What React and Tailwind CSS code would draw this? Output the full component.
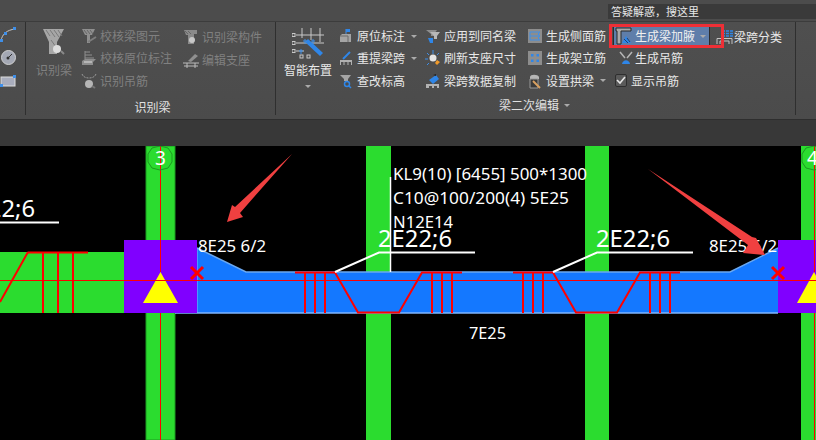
const CJK = "font-['Noto_Sans_CJK_SC','Noto_Sans',sans-serif]";

function Arrow() {
  return <span className="w-0 h-0 border-x-[3px] border-x-transparent border-t-[3px] border-t-[#aaa]" />;
}

/* small ribbon icons, 16x16 */
function Icon({ name }) {
  switch (name) {
    case "checkBeam":
      return (
        <svg width="16" height="16" viewBox="0 0 16 16">
          <path d="M1 1h13l-3 6H9v8H6V7H4z" fill="#8f8f8f" />
          <path d="M3 2l3 4M6 2l3 4M9 2l3 4" stroke="#666" />
          <path d="M7 14l8-5" stroke="#7d7d7d" strokeWidth="2" />
        </svg>
      );
    case "checkOrigin":
      return (
        <svg width="16" height="16" viewBox="0 0 16 16">
          <path d="M4 1v8M4 2h5M4 5h7M4 8h9" stroke="#8f8f8f" fill="none" />
          <path d="M1 11l3-2h11l-3 3v3H1z" fill="#8d8d8d" />
          <path d="M3 11h8v2H3z" fill="#b5b5b5" />
        </svg>
      );
    case "hanger":
      return (
        <svg width="16" height="16" viewBox="0 0 16 16">
          <path d="M1 1c1 3 4 4 7 4s6-1 7-4" stroke="#999" fill="none" strokeDasharray="2 1" />
          <circle cx="8" cy="11" r="4" fill="#b5b5b5" />
          <path d="M11 13l3 2" stroke="#777" strokeWidth="2" />
        </svg>
      );
    case "beamPart":
      return (
        <svg width="16" height="16" viewBox="0 0 16 16">
          <path d="M1 1h13v4h-3v10H5V6H3z" fill="#8a8a8a" />
          <path d="M2 2l3 3M5 2l3 3" stroke="#666" />
          <circle cx="9" cy="11" r="3" fill="#c8c8c8" />
        </svg>
      );
    case "support":
      return (
        <svg width="16" height="16" viewBox="0 0 16 16">
          <path d="M5 9l7-7 3 2-7 6z" fill="#8f8f8f" />
          <path d="M0 11h16M1 14h14M4 11v5M12 11v5" stroke="#bbb" fill="none" />
        </svg>
      );
    case "origin":
      return (
        <svg width="14" height="16" viewBox="0 0 14 16">
          <path d="M7 1v6" stroke="#4a90e2" />
          <path d="M7 1h4v3H7z" fill="#2f86e8" />
          <path d="M1 8l2-2h9v8H1z" fill="#a4a4a4" />
          <path d="M1 8h8v6" fill="none" stroke="#6a6a6a" />
        </svg>
      );
    case "respan":
      return (
        <svg width="14" height="16" viewBox="0 0 14 16">
          <path d="M4 9l7-7" stroke="#2f86e8" strokeWidth="2" />
          <path d="M1 10h12v5h-1v-3H2v3H1z" fill="#b0b0b0" />
          <path d="M5 12v3M9 12v3" stroke="#b0b0b0" />
        </svg>
      );
    case "elev":
      return (
        <svg width="14" height="16" viewBox="0 0 14 16">
          <path d="M1 2h11l-3 4v2H5V6z" fill="#a5a5a5" />
          <circle cx="8" cy="11" r="2.5" fill="none" stroke="#2f86e8" strokeWidth="1.5" />
          <path d="M10 13l2 2" stroke="#2f86e8" strokeWidth="1.5" />
        </svg>
      );
    case "apply":
      return (
        <svg width="16" height="16" viewBox="0 0 16 16">
          <path d="M1 2h11l-3 4v2H6V6z" fill="#8e8e8e" />
          <path d="M5 4h10l-3 4v3H9V8z" fill="#b8b8b8" />
          <path d="M3 10h5v5H5z" fill="#2f86e8" />
        </svg>
      );
    case "refresh":
      return (
        <svg width="18" height="18" viewBox="0 0 18 18">
          <path d="M9 1v4M3 4l2 2M15 4l-2 2M1 10h3" stroke="#3f8fe8" fill="none" />
          <path d="M3 16l2-2" stroke="#3f8fe8" />
          <circle cx="9" cy="9" r="3.5" fill="#e4e4e4" />
          <path d="M13 11l3 2-3 3-2-2z" fill="#f09a2a" />
        </svg>
      );
    case "copy":
      return (
        <svg width="16" height="16" viewBox="0 0 16 16">
          <path d="M4 7l7-5 3 4-6 5z" fill="#2f86e8" />
          <path d="M8 2l3-1v2z" fill="#222" />
          <path d="M1 11h13v4h-2v-2H9v2H7v-2H4v2H1z" fill="#b2b2b2" />
        </svg>
      );
    case "side":
      return (
        <svg width="14" height="14" viewBox="0 0 14 14">
          <rect width="14" height="14" fill="#8d8d8d" />
          <path d="M2 3h10M2 7h10M2 11h10" stroke="#3f8fe8" />
          <path d="M2 3v8M12 3l-2 2 2 2-2 2 2 2" stroke="#3f8fe8" fill="none" />
        </svg>
      );
    case "frame":
      return (
        <svg width="14" height="14" viewBox="0 0 14 14">
          <rect width="14" height="14" fill="#8d8d8d" />
          <rect x="3" y="3" width="2.5" height="2.5" fill="#2f86e8" />
          <rect x="8.5" y="3" width="2.5" height="2.5" fill="#2f86e8" />
          <rect x="3" y="8.5" width="2.5" height="2.5" fill="#2f86e8" />
          <rect x="8.5" y="8.5" width="2.5" height="2.5" fill="#2f86e8" />
        </svg>
      );
    case "arch":
      return (
        <svg width="14" height="16" viewBox="0 0 14 16">
          <path d="M2 4c0-3 8-3 9 0v2H2z" fill="#b5b5b5" />
          <path d="M2 6h8v9H2z" fill="#3a3a3a" stroke="#999" />
          <path d="M5 8l7 7" stroke="#d8a060" strokeWidth="2" />
        </svg>
      );
    case "haunch":
      return (
        <svg width="18" height="18" viewBox="0 0 18 18">
          <path d="M1 1h15v3H6v13H2V4H1z" fill="#a9a9a9" stroke="#2b2b2b" />
          <path d="M7 16l4-7 5 7z" fill="#2f86e8" />
          <path d="M9 12l4 4M12 11l3 4" stroke="#1f3f70" />
        </svg>
      );
    case "stirrup":
      return (
        <svg width="14" height="14" viewBox="0 0 14 14">
          <path d="M1 1l5 6M13 1L8 7" stroke="#b5b5b5" strokeWidth="1.5" fill="none" />
          <path d="M3 13c1-5 7-5 8 0z" fill="#2f86e8" />
        </svg>
      );
    default:
      return null;
  }
}

function Item({ icon, label, arrow, dim, w }) {
  return (
    <div className={`h-[23px] flex items-center ${w}`}>
      <span className="w-[18px] mr-[1px] flex justify-center shrink-0"><Icon name={icon} /></span>
      <span className={`ml-[1px] text-[12px] whitespace-nowrap ${dim ? "text-[#808080]" : "text-[#e8e8e8]"}`}>{label}</span>
      {arrow && <span className="ml-[6px] flex"><Arrow /></span>}
    </div>
  );
}

function Column({ className, children }) {
  return <div className={`flex flex-col shrink-0 ${className}`}>{children}</div>;
}

function Ribbon() {
  return (
    <div className={`relative h-[99px] flex border-t border-[#3c3c3c] border-b border-b-[#2e2e2e] bg-linear-to-b from-[#4f4f4f] to-[#4b4b4b] ${CJK}`}>
      {/* cut off draw tools */}
      <div className="w-[26px] shrink-0 flex flex-col pt-[5px] border-r border-[#2f2f2f] mb-[4px]">
        <svg width="17" height="16" viewBox="0 0 17 16">
          <path d="M1 14C2 7 7 3 15 2" stroke="#c9c9c9" fill="none" />
          <rect y="12" width="3" height="3" fill="#3f8fe8" />
          <rect x="4" y="5" width="3" height="3" fill="#3f8fe8" />
          <rect x="13" y="0" width="3" height="3" fill="#3f8fe8" />
        </svg>
        <svg className="mt-[7px] ml-[1px]" width="15" height="15" viewBox="0 0 15 15">
          <circle cx="7.5" cy="7.5" r="7" fill="#a4a8b4" stroke="#d0d0d0" />
          <path d="M7 8l4-4" stroke="#333" />
          <circle cx="7" cy="8" r="1.5" fill="#333" />
        </svg>
        <svg className="mt-[10px]" width="16" height="12" viewBox="0 0 16 12">
          <rect x="1" y="2" width="14" height="9" fill="#a9adbd" stroke="#ddd" />
          <rect x="13" y="0" width="3" height="3" fill="#3f8fe8" />
          <rect y="9" width="3" height="3" fill="#3f8fe8" />
        </svg>
      </div>

      {/* 识别梁 */}
      <div className="w-[250px] shrink-0 flex flex-col border-r border-[#2f2f2f] mb-[4px]">
        <div className="flex h-[70px] pt-[3px]">
          <div className="w-[54px] ml-[1px] flex flex-col items-center pt-[3px]">
            <svg width="24" height="28" viewBox="0 0 24 28">
              <path d="M1 1h21l-7 13v12H7V14z" fill="#a6a6a6" />
              <path d="M4 2l4 6M8 2l5 7M12 2l5 7M16 2l4 6M9 12l5 7" stroke="#7a7a7a" />
              <circle cx="15" cy="21" r="4" fill="#dcdcdc" />
              <path d="M19 23l3 3" stroke="#888" strokeWidth="2" />
            </svg>
            <span className="text-[12px] text-[#808080] mt-[5px]">识别梁</span>
          </div>
          <Column className="w-[102px] -ml-[1px]">
            <Item dim icon="checkBeam" label="校核梁图元" />
            <Item dim icon="checkOrigin" label="校核原位标注" />
            <Item dim icon="hanger" label="识别吊筋" />
          </Column>
          <Column className="w-[80px]">
            <Item dim icon="beamPart" label="识别梁构件" />
            <Item dim icon="support" label="编辑支座" />
          </Column>
        </div>
        <div className="text-[12px] text-[#e0e0e0] text-center pl-[4px] mt-[6px]">识别梁</div>
      </div>

      {/* 梁二次编辑 */}
      <div className="w-[520px] shrink-0 flex flex-col border-r border-[#2f2f2f] mb-[4px]">
        <div className="flex h-[70px] pt-[3px]">
          <div className="w-[62px] shrink-0 flex flex-col items-center pl-[2px] pt-[2px]">
            <svg width="32" height="32" viewBox="0 0 32 32">
              <path d="M4 8h28M4 16h28M4 24h8M10 1v10M19 1v12M28 1v14" stroke="#c8c8c8" fill="none" />
              <rect x="0" y="6.5" width="3" height="3" fill="none" stroke="#c8c8c8" />
              <rect x="0" y="14.5" width="3" height="3" fill="none" stroke="#c8c8c8" />
              <rect x="0" y="22.5" width="3" height="3" fill="none" stroke="#c8c8c8" />
              <rect x="8" y="28" width="3" height="3" fill="none" stroke="#c8c8c8" />
              <rect x="15" y="28" width="3" height="3" fill="none" stroke="#c8c8c8" />
              <path d="M13 15l3-3 15 14-3 3z" fill="#2f86e8" />
              <path d="M13 12v5M11 14h4M21 12v5M19 14h4M9 22v5M7 24h4" stroke="#3f8fe8" />
            </svg>
            <span className="text-[12px] text-[#e8e8e8] mt-[2px] whitespace-nowrap">智能布置</span>
            <span className="mt-[6px] flex"><Arrow /></span>
          </div>
          <Column className="w-[86px] -ml-[1px] mr-[1px]">
            <Item icon="origin" label="原位标注" arrow />
            <Item icon="respan" label="重提梁跨" arrow />
            <Item icon="elev" label="查改标高" />
          </Column>
          <Column className="w-[102px]">
            <Item icon="apply" label="应用到同名梁" />
            <Item icon="refresh" label="刷新支座尺寸" />
            <Item icon="copy" label="梁跨数据复制" />
          </Column>
          <Column className="w-[88px]">
            <Item icon="side" label="生成侧面筋" />
            <Item icon="frame" label="生成架立筋" />
            <Item icon="arch" label="设置拱梁" arrow />
          </Column>
          <Column className="w-[102px]">
            <div className="h-[23px] flex items-center ml-[-1px]">
              <div className="h-[21px] w-[97px] flex items-center bg-[#5f7eaa] border border-[#2c2c2c] pl-[1px]">
                <Icon name="haunch" />
                <span className="ml-[2px] text-[12px] text-[#f0f0f0] whitespace-nowrap">生成梁加腋</span>
                <span className="ml-[5px] flex"><Arrow /></span>
              </div>
            </div>
            <div className="h-[23px] flex items-center pl-[5px]">
              <Icon name="stirrup" />
              <span className="ml-[2px] text-[12px] text-[#e8e8e8]">生成吊筋</span>
            </div>
            <div className="h-[23px] flex items-center pl-[1px]">
              <span className="w-[12px] h-[13px] rounded-[2px] border border-[#2e2e2e] bg-[#5a5a5a] flex items-center justify-center">
                <svg width="10" height="9" viewBox="0 0 10 9"><path d="M1 4l3 3 5-6" stroke="#e6e6e6" strokeWidth="1.6" fill="none" /></svg>
              </span>
              <span className="ml-[4px] text-[12px] text-[#e8e8e8]">显示吊筋</span>
            </div>
          </Column>
          <Column className="w-[72px]">
            <div className="h-[23px] flex items-center">
              <svg width="17" height="14" viewBox="0 0 17 14">
                <path d="M6 1h11M6 3.5h11M6 6h11" stroke="#2f86e8" strokeWidth="1.5" strokeDasharray="3 1" />
                <path d="M1 14V8.5h15V14M4 14v-3h9v3" stroke="#c2c2c2" fill="none" />
              </svg>
              <span className="ml-[1px] text-[12px] text-[#e8e8e8] whitespace-nowrap">梁跨分类</span>
            </div>
          </Column>
        </div>
        <div className="flex items-center justify-center gap-[5px] mt-[4px] pr-[2px] text-[12px] text-[#e0e0e0]">
          <span>梁二次编辑</span>
          <Arrow />
        </div>
      </div>

      {/* highlight drawn on the shot */}
      <div className="absolute left-[609px] top-[2px] w-[115px] h-[24px] border-[3px] border-[#ee2f36]" />
    </div>
  );
}

function CadText({ x, y, size = 16, w, children }) {
  return (
    <text x={x} y={y} fontSize={size} fill="#fff" textLength={w} lengthAdjust="spacingAndGlyphs" className="font-['Noto_Sans',sans-serif]">
      {children}
    </text>
  );
}

function Rebars({ xs }) {
  return xs.map((x) => <path key={x} d={`M${x} 272V313`} stroke="#f00" strokeWidth="2" />);
}

function Canvas() {
  return (
    <div className="h-[294px] bg-black overflow-hidden">
      <svg width="816" height="294" viewBox="0 146 816 294" className="block">
        {/* columns */}
        <rect x="146" y="146" width="29" height="294" fill="#2bdc2f" stroke="#1c9a20" />
        <rect x="366" y="146" width="25" height="294" fill="#2bdc2f" />
        <rect x="585" y="146" width="24" height="294" fill="#2bdc2f" />
        <rect x="801" y="146" width="20" height="294" fill="#2bdc2f" />
        <path d="M160.5 146V440M814.5 146V440" stroke="#f00" />

        {/* left beam */}
        <rect x="0" y="252" width="124" height="61" fill="#2bdc2f" />
        <path d="M28 252.5H88" stroke="#f00" strokeWidth="2" />
        <path d="M43 252V313M58 252V313M73 252V313M28 252L0 302" stroke="#f00" strokeWidth="2" fill="none" />

        {/* blue beam */}
        <path d="M197 248L246 272H730L778 248V313H197Z" fill="#1478ff" />
        <path d="M197 248L246 272H730L778 248" stroke="#6aa8f0" strokeWidth="1.5" fill="none" />
        <path d="M175 313H778" stroke="#7fb6ff" strokeWidth="1.5" />
        <path d="M197 248V313" stroke="#7fb6ff" />

        {/* supports */}
        <rect x="124" y="240" width="73" height="73" fill="#8000ff" />
        <rect x="778" y="240" width="38" height="73" fill="#8000ff" />
        <path d="M160.5 272L178 303H143Z" fill="#ff0" />
        <path d="M814 272L832 303H797Z" fill="#ff0" />
        <path d="M160.5 240V272M814.5 240V272" stroke="#f00" />
        <path d="M0 280.5H816" stroke="#f00" />

        {/* rebar marks */}
        <g fill="none" stroke="#f00" strokeWidth="2">
          <path d="M295 272.5H335L358 312.5H399L422 272.5H462" />
          <path d="M513 272.5H553L576 312.5H617L640 272.5H680" />
        </g>
        <Rebars xs={[305, 315, 325, 432, 442, 452, 523, 533, 543, 650, 660, 670]} />
        <path d="M191 267L203 279M203 267L191 279M772 267L784 279M784 267L772 279" stroke="#f00" strokeWidth="3" />

        {/* axis bubbles */}
        <path d="M152 148L160 146L168 148L172 154V162L168 168L160 170L152 168L148 162V154Z" fill="none" stroke="#1c9a20" />
        <path d="M806 148L814 146L822 148L826 154V162L822 168L814 170L806 168L802 162V154Z" fill="none" stroke="#1c9a20" />
        <CadText x={155} y={164.5} size={19}>3</CadText>
        <CadText x={807} y={164.5} size={19}>4</CadText>

        {/* leaders */}
        <path d="M390.5 177V272" stroke="#fff" strokeWidth="1.5" />
        <path d="M475 252.5H379L335 272M693 252.5H597L553 272M0 222.5H59" stroke="#fff" strokeWidth="2" fill="none" />

        {/* annotations */}
        <CadText x={-39} y={217} size={24} w={74}>2E22;6</CadText>
        <CadText x={393} y={180} w={194}>KL9(10) [6455] 500*1300</CadText>
        <CadText x={393} y={204} w={176}>C10@100/200(4) 5E25</CadText>
        <CadText x={393} y={228} w={60}>N12E14</CadText>
        <CadText x={378} y={247} size={24} w={74}>2E22;6</CadText>
        <CadText x={596} y={247} size={24} w={74}>2E22;6</CadText>
        <CadText x={198} y={252} w={68}>8E25 6/2</CadText>
        <CadText x={709} y={252} w={68}>8E25 6/2</CadText>
        <CadText x={469} y={339} w={37}>7E25</CadText>

        {/* hand drawn arrows */}
        <path d="M292 154L240 213L243 217L227 222L232 205L235 207Z" fill="#f04040" />
        <path d="M648 169L752 237L756 238L765 255L743 253L748 245Z" fill="#f04040" />
      </svg>
    </div>
  );
}

export default function App() {
  return (
    <div className="w-[816px] h-[440px] overflow-hidden bg-black">
      <div className={`h-[21px] bg-[#4c4c4c] flex justify-end items-start pt-[4px] ${CJK}`}>
        <div className="w-[208px] h-[15px] bg-[#3a3a3a] text-[11px] leading-[15px] text-[#e8e8e8] pl-[3px]">答疑解惑，搜这里</div>
      </div>
      <Ribbon />
      <div className="h-[26px] bg-[#383838]" />
      <Canvas />
    </div>
  );
}
